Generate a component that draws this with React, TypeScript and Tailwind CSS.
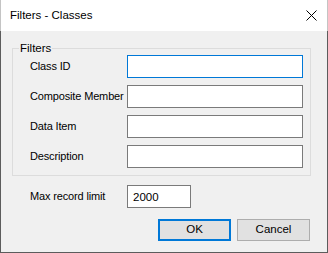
export default function App() {
  const fields = ['Class ID', 'Composite Member', 'Data Item', 'Description'];

  return (
    <div
      className="flex h-[253px] w-[328px] flex-col text-[11.5px] text-black"
      style={{ fontFamily: '"Liberation Sans", Arial, sans-serif' }}
    >
      <div className="flex h-[31px] items-center justify-between border-x border-[#c4c4c4] bg-white pl-[9px]">
        <span className="leading-none">Filters - Classes</span>
        <svg width="11" height="11" viewBox="0 0 11 11" className="mr-[10px]">
          <path d="M0.5 0.5 L10.5 10.5 M10.5 0.5 L0.5 10.5" stroke="#000" strokeWidth="1" fill="none" />
        </svg>
      </div>

      <div className="flex flex-1 flex-col border-x border-b border-[#5c5c5c] bg-[#f0f0f0] pl-[11px] pt-[17px]">
        <div className="relative w-[299px] border border-[#dcdcdc] pb-[7px] pl-[17px] pt-[6px]">
          <span className="absolute -top-[8px] left-[6px] bg-[#f0f0f0] px-[1px] leading-[14px]">Filters</span>
          <div className="flex flex-col gap-[7px]">
            {fields.map((f, i) => (
              <div key={f} className="flex h-[23px] items-center">
                <span className="w-[97px] whitespace-nowrap text-[11px] tracking-[-0.15px]">{f}</span>
                <input
                  className={
                    'h-[23px] w-[176px] border bg-white outline-none ' +
                    (i === 0 ? 'border-[#0078d7]' : 'border-[#7a7a7a]')
                  }
                />
              </div>
            ))}
          </div>
        </div>

        <div className="mt-[9px] flex h-[23px] items-center pl-[18px]">
          <span className="w-[97px] whitespace-nowrap text-[11px] tracking-[-0.15px]">Max record limit</span>
          <input
            defaultValue="2000"
            className="h-[23px] w-[64px] border border-[#7a7a7a] bg-white px-[5px] outline-none"
          />
        </div>

        <div className="mt-[11px] flex w-[298px] justify-end gap-[6px]">
          <button className="h-[22px] w-[73px] border-2 border-[#0078d7] bg-[#e1e1e1]">OK</button>
          <button className="h-[22px] w-[73px] border border-[#adadad] bg-[#e1e1e1]">Cancel</button>
        </div>
      </div>
    </div>
  );
}
